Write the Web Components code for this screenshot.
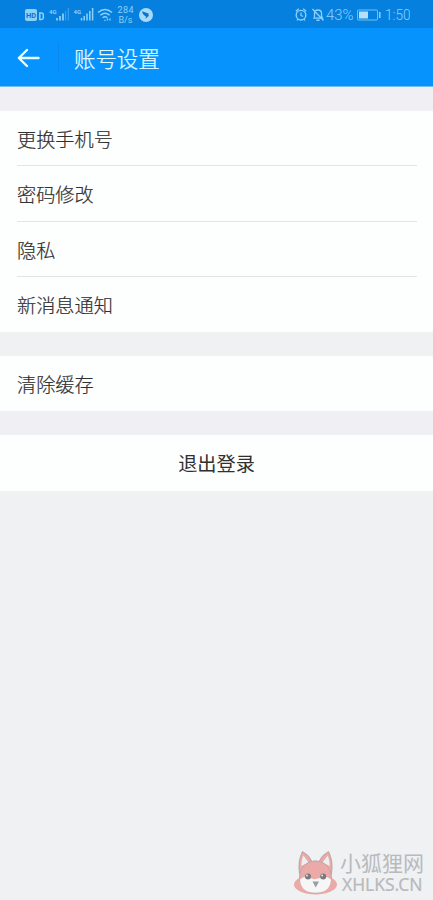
<!DOCTYPE html>
<html lang="zh-CN">
<head>
<meta charset="utf-8">
<title>账号设置</title>
<style>
html,body{margin:0;height:100%}
body{background:#eff1f3;font-family:"Noto Sans CJK SC","Noto Sans",sans-serif;color:#303030;overflow:hidden}
</style>
</head>
<body>
<settings-screen></settings-screen>
<script>
const define=(name,html)=>customElements.define(name,class extends HTMLElement{
  constructor(){super();this.attachShadow({mode:'open'}).innerHTML=html;}
});

define('status-bar',`<style>
:host{display:flex;height:28px;box-sizing:border-box;padding:0 23px 0 25px;background:#0580df;justify-content:space-between;color:#8dd0fa;font-family:Roboto,"Noto Sans",sans-serif}
svg{display:block;height:28px}
text{fill:currentColor;font-weight:300;stroke:none}
</style>
<svg width="130" viewBox="25 0 130 28" fill="none" stroke="currentColor">
 <rect x="25" y="9" width="12" height="12" rx="2" fill="currentColor" stroke="none"/>
 <text x="26" y="17.7" textLength="10" style="font-size:7.5px;font-weight:700;fill:#0873c8">HD</text>
 <path d="M39.8 13v6.5h1.8q1.7 0 1.7-1.7v-3q0-1.8-1.7-1.8z" stroke-width="1.5"/>
 <text x="49" y="13.5" style="font-size:6px;font-weight:700">4G</text>
 <path d="M57 18v2.5M60 16v4.5M63 13.5v7" stroke-width="1.7"/>
 <path d="M65.7 11v9.5M68.3 8v12.5" stroke-width="1" opacity=".45"/>
 <text x="73.5" y="13.5" style="font-size:6px;font-weight:700">4G</text>
 <path d="M81.5 18v2.5M84.2 16v4.5M87 13.5v7M89.8 11v9.5M92.6 8v12.5" stroke-width="1.5"/>
 <path d="M98 12.5q7-6 14 0M100.3 15.2q4.7-4 9.4 0M102.7 17.7q2.3-2 4.6 0" stroke-width="1.5"/>
 <path d="M104.5 20l1 .8M107.5 18.5v2M110 18.5v2" stroke-width="1.3"/>
 <text x="117.5" y="12.8" style="font-size:9px;font-weight:400" textLength="16">284</text>
 <text x="118.5" y="23.4" style="font-size:9px;font-weight:400" textLength="14">B/s</text>
 <circle cx="146" cy="15" r="7" fill="#a5dafa" stroke="none"/>
 <path d="M142 11.3l7 2.5-1 1.1 1.2.5-3.7 3.4.5-2.4q-3.3-1.4-4-5.100z" fill="#0876c9" stroke="none"/>
</svg>
<svg width="116" viewBox="294 0 116 28" fill="none" stroke="currentColor">
 <circle cx="301" cy="15.2" r="4.8" stroke-width="1.4"/><path d="M301 12.5v3l2 1M295.8 11.2l3-2.5M306.2 11.2l-3-2.5M298 19l-1 1.5M304 19l1 1.5" stroke-width="1.2"/>
 <path d="M314 18.2h8.5l-1-1.8v-3.2q0-3.2-3.5-3.2t-3.5 3.2v3.2zM316.5 19.7q1.500 1.300 3 0M312.500 9l11 11.500" stroke-width="1.3"/>
 <text x="326" y="20" style="font-size:14px" textLength="27.5" lengthAdjust="spacingAndGlyphs">43%</text>
 <rect x="357.5" y="10" width="20" height="10" rx="1" stroke-width=".8"/>
 <rect x="359" y="11.5" width="9" height="7" fill="#b4e0fb" stroke="none"/>
 <path d="M379.8 12v6" stroke-width="1.5"/>
 <text x="385" y="20" style="font-size:14px" textLength="25.5" lengthAdjust="spacingAndGlyphs">1:50</text>
</svg>`);

define('nav-bar',`<style>
:host{display:flex;align-items:center;height:59px;box-sizing:border-box;padding-left:17px;background:#0693fe;border-bottom:1px solid #76bdf0;color:#e3fcff;font-size:21.4px;font-weight:300;-webkit-text-stroke:.25px currentColor}
svg{display:block;padding-top:2px}
i{width:1px;height:30px;margin:0 15px 0 17px;background:#0a88ec}
</style>
<svg width="24" height="20" fill="none" stroke="#e8ffff" stroke-width="2.4" stroke-linecap="round" stroke-linejoin="round"><path d="M21.5 10H2M10 2L1.8 10l8.2 8"/></svg>
<i></i><slot></slot>`);

define('settings-group',`<style>
:host{display:block;background:#fdfefe;border-top:24px solid #f0f0f4}
:host(:nth-child(2)){border-top-color:#eff1f3}
</style><slot></slot>`);

define('settings-row',`<style>
:host{display:block;padding:0 16px 0 17px;font-size:19.2px;font-weight:300;-webkit-text-stroke:.2px currentColor}
div{height:55.3px;line-height:57px;box-sizing:border-box;border-bottom:1px solid #e3e4e4}
:host(:last-child) div{border-bottom-color:transparent}
:host([action]){padding-right:17px;text-align:center;font-weight:400;-webkit-text-stroke:0}
</style><div><slot></slot></div>`);

define('site-mark',`<style>
:host{position:absolute;left:292px;top:848px;display:flex;color:#b8babd}
svg{display:block}
.words{display:flex;flex-direction:column;padding:4px 0 0 4px}
b,span{font-weight:400;white-space:nowrap}
b{font-size:21px;line-height:21px}
span{font:400 17.5px/22px "Noto Sans",sans-serif;padding-left:2px;letter-spacing:-.05px;-webkit-text-stroke:.2px currentColor}
</style>
<svg width="44" height="48" viewBox="292 848 44 48" style="overflow:visible">
 <ellipse cx="315.5" cy="884.5" rx="21.5" ry="10" fill="#eba9a7"/>
 <path d="M299.5 874Q297.5 861 302.5 851.5q7 3.5 10 11zM331.5 874q2-13-3-22.5-7 3.5-10 11z" fill="#eba9a7" stroke="#b3a2a4" stroke-width=".9"/>
 <path d="M301.3 866q-.2-6 2-10.5l5.2 7zM329.7 866q.2-6-2-10.5l-5.2 7z" fill="#edf0f1"/>
 <ellipse cx="315.5" cy="877" rx="16" ry="16.2" fill="#eba9a7" stroke="#b8a6a8" stroke-width=".9"/>
 <path d="M299.900 879.500q5-4.500 10.500-1.500 3 1.500 5 1t5.200-1q5.500-3 10.500 1.500-1 13.300-15.600 13.300t-15.600-13.300z" fill="#f5f6f5"/>
 <path d="M312.500 881.500h6.500l-3.300 6z" fill="#9a9d9f"/>
 <circle cx="308" cy="876.5" r="3" fill="#777b7e"/><circle cx="323.2" cy="876.5" r="3" fill="#777b7e"/>
 <circle cx="307" cy="875.5" r=".9" fill="#eee"/><circle cx="322.2" cy="875.5" r=".9" fill="#eee"/>
</svg>
<div class="words"><b>小狐狸网</b><span>XHLKS.CN</span></div>`);

define('settings-screen',`<style>
:host,header{display:block}
</style>
<header><status-bar></status-bar><nav-bar>账号设置</nav-bar></header>
<main>
<settings-group><settings-row>更换手机号</settings-row><settings-row>密码修改</settings-row><settings-row>隐私</settings-row><settings-row>新消息通知</settings-row></settings-group>
<settings-group><settings-row>清除缓存</settings-row></settings-group>
<settings-group><settings-row action>退出登录</settings-row></settings-group>
</main>
<site-mark></site-mark>`);
</script>
</body>
</html>
